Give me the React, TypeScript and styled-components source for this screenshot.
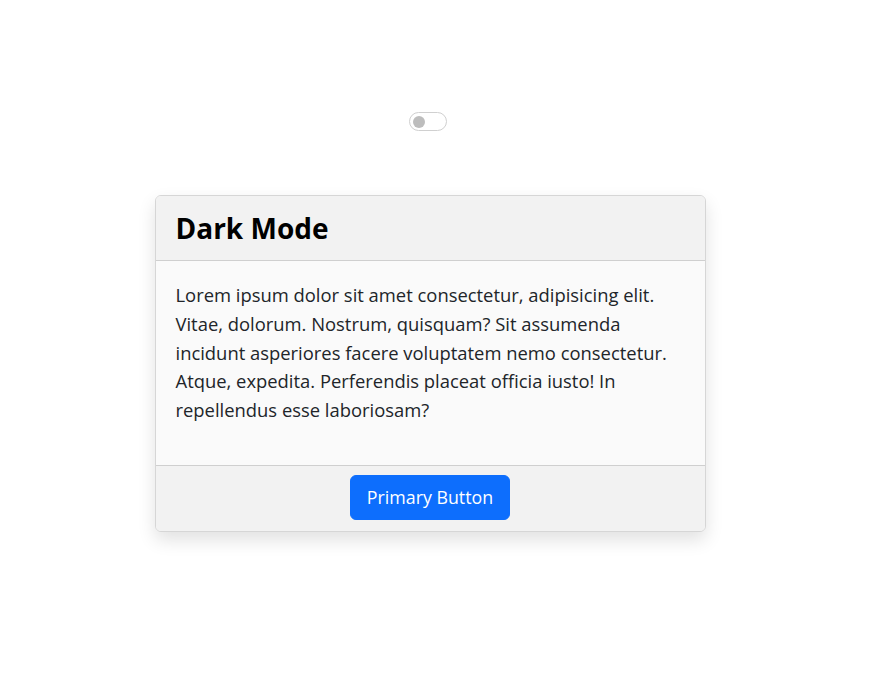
import { createGlobalStyle } from "styled-components";
import styled from "styled-components";

const GlobalStyle = createGlobalStyle`
  html, body {
    margin: 0;
    padding: 0;
    background: #ffffff;
  }
  body {
    font-family: "Open Sans", "Noto Sans", sans-serif;
    color: #212529;
  }
`;

const Page = styled.div`
  display: flex;
  flex-direction: column;
  align-items: center;
  gap: 64px;
  padding: 112px 20px 0 0;
  min-height: 100vh;
  box-sizing: border-box;
`;

const Switch = styled.button<{ $on?: boolean }>`
  position: relative;
  width: 38px;
  height: 19px;
  margin-right: 4px;
  padding: 0;
  border: 1px solid #d0d0d0;
  border-radius: 10px;
  background: ${(p) => (p.$on ? "#0d6efd" : "#ffffff")};
  cursor: pointer;

  &::after {
    content: "";
    position: absolute;
    top: 2.5px;
    left: ${(p) => (p.$on ? "22px" : "3px")};
    width: 12px;
    height: 12px;
    border-radius: 50%;
    background: ${(p) => (p.$on ? "#ffffff" : "#bdbdbd")};
  }
`;

const Card = styled.div`
  width: 551px;
  box-sizing: border-box;
  border: 1px solid #d6d6d6;
  border-radius: 6px;
  overflow: hidden;
  background: #fafafa;
  box-shadow: 0 8px 18px rgba(0, 0, 0, 0.12);
`;

const Header = styled.div`
  background: #f2f2f2;
  border-bottom: 1px solid #cfcfcf;
  padding: 15px 20px;
`;

const Title = styled.h2`
  margin: 0;
  font-size: 28px;
  line-height: 34px;
  font-weight: 700;
  color: #000;
`;

const Body = styled.div`
  padding: 20px 20px 40px;
`;

const Text = styled.p`
  margin: 0;
  font-size: 18.4px;
  line-height: 28.8px;
  color: #212529;
`;

const Footer = styled.div`
  display: flex;
  justify-content: center;
  background: #f2f2f2;
  border-top: 1px solid #cfcfcf;
  padding: 9px 20px 11px;
`;

const PrimaryButton = styled.button`
  font-family: inherit;
  font-size: 17.8px;
  line-height: 27px;
  padding: 8px 16px;
  color: #ffffff;
  background: #0d6efd;
  border: 1px solid #0d6efd;
  border-radius: 6px;
  cursor: pointer;
`;

export default function App() {
  return (
    <>
      <GlobalStyle />
      <Page>
        <Switch aria-label="Toggle dark mode" />
        <Card>
          <Header>
            <Title>Dark Mode</Title>
          </Header>
          <Body>
            <Text>
              Lorem ipsum dolor sit amet consectetur, adipisicing elit. Vitae,
              dolorum. Nostrum, quisquam? Sit assumenda incidunt asperiores
              facere voluptatem nemo consectetur. Atque, expedita. Perferendis
              placeat officia iusto! In repellendus esse laboriosam?
            </Text>
          </Body>
          <Footer>
            <PrimaryButton>Primary Button</PrimaryButton>
          </Footer>
        </Card>
      </Page>
    </>
  );
}
